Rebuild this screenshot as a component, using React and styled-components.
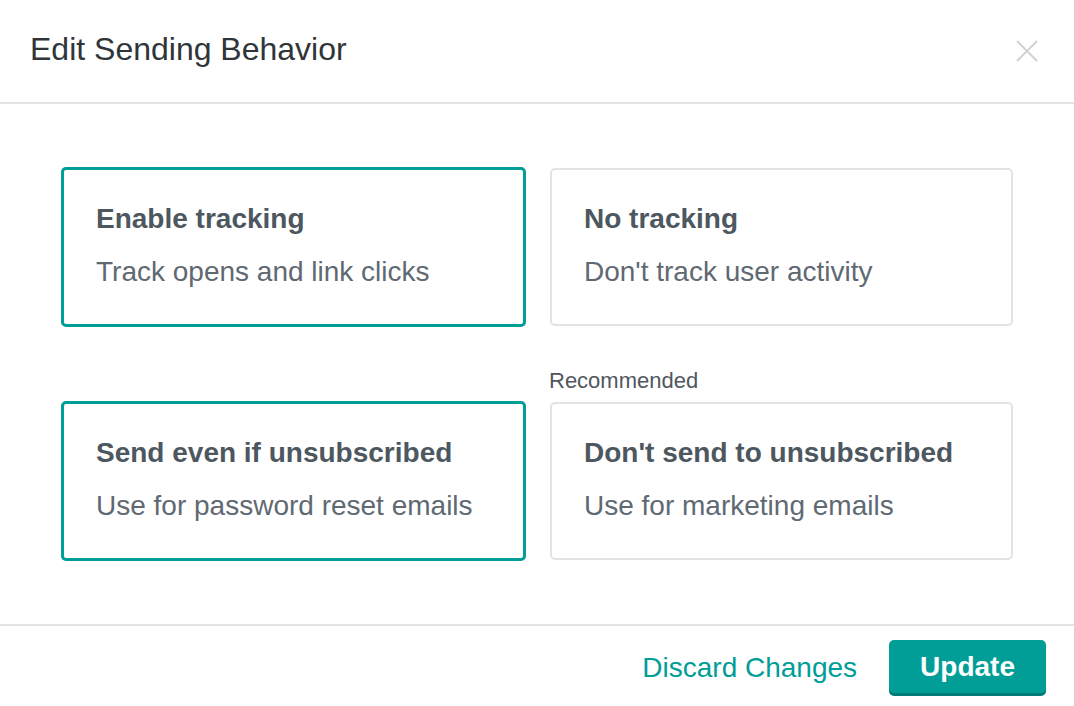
import React, { useState } from "react";
import styled, { createGlobalStyle } from "styled-components";

const GlobalStyle = createGlobalStyle`
  html, body {
    margin: 0;
    padding: 0;
    background: #fff;
  }
  body {
    font-family: "Liberation Sans", Arial, Helvetica, sans-serif;
  }
`;

const TEAL = "#009e97";

const Modal = styled.div`
  width: 1074px;
  height: 706px;
  background: #fff;
  display: flex;
  flex-direction: column;
  box-sizing: border-box;
`;

const Header = styled.div`
  height: 104px;
  display: flex;
  align-items: center;
  justify-content: space-between;
  padding: 0 36px 4px 30px;
  box-sizing: border-box;
  border-bottom: 2px solid #e4e4e4;
`;

const Title = styled.h1`
  margin: 0;
  font-size: 32px;
  line-height: 32px;
  font-weight: 400;
  color: #30353a;
`;

const Close = styled.button`
  border: 0;
  background: none;
  padding: 0;
  width: 22px;
  height: 22px;
  margin-top: 4px;
  cursor: pointer;
  display: flex;
`;

const Body = styled.div`
  flex: 1;
  padding: 63px 60px 0 61px;
  display: grid;
  grid-template-columns: 1fr 1fr;
  column-gap: 23px;
  align-content: start;
`;

const Cell = styled.div`
  display: flex;
  flex-direction: column;
  margin-top: ${(p) => (p.$labelled ? "46px" : "0")};
`;

const Label = styled.div`
  height: 28px;
  box-sizing: border-box;
  padding-bottom: 9px;
  display: flex;
  align-items: flex-end;
  font-size: 22px;
  line-height: 22px;
  color: #50575e;
`;

const Card = styled.button`
  all: unset;
  box-sizing: border-box;
  height: ${(p) => (p.$selected ? "160px" : "158px")};
  margin: ${(p) => (p.$selected ? "0" : "1px")};
  border: ${(p) => (p.$selected ? `3px solid ${TEAL}` : "2px solid #e3e3e3")};
  border-radius: 5px;
  padding: 32px 32px 0 32px;
  display: flex;
  flex-direction: column;
  gap: 19px;
  cursor: pointer;
  font-family: "Liberation Sans", Arial, Helvetica, sans-serif;
`;

const CardTitle = styled.div`
  font-size: 28px;
  line-height: 34px;
  font-weight: 700;
  color: #4d5760;
`;

const CardText = styled.div`
  font-size: 28px;
  line-height: 34px;
  color: #5f6972;
`;

const Footer = styled.div`
  border-top: 2px solid #e4e4e4;
  padding: 14px 28px 10px 0;
  display: flex;
  justify-content: flex-end;
  align-items: center;
  gap: 32px;
`;

const LinkButton = styled.button`
  border: 0;
  background: none;
  padding: 0;
  font-family: inherit;
  font-size: 28px;
  color: ${TEAL};
  cursor: pointer;
  margin-bottom: 1px;
`;

const PrimaryButton = styled.button`
  border: 0;
  background: ${TEAL};
  color: #fff;
  font-family: inherit;
  font-size: 28px;
  font-weight: 700;
  height: 53px;
  padding: 0 31px;
  border-radius: 5px;
  box-shadow: 0 3px 0 #007a74;
  margin-bottom: 3px;
  cursor: pointer;
`;

const groups = [
  {
    key: "tracking",
    options: [
      { id: "track", title: "Enable tracking", text: "Track opens and link clicks" },
      { id: "notrack", title: "No tracking", text: "Don't track user activity" },
    ],
  },
  {
    key: "unsub",
    options: [
      { id: "send", title: "Send even if unsubscribed", text: "Use for password reset emails" },
      {
        id: "nosend",
        title: "Don't send to unsubscribed",
        text: "Use for marketing emails",
        label: "Recommended",
      },
    ],
  },
];

export default function App() {
  const [choice, setChoice] = useState({ tracking: "track", unsub: "send" });

  return (
    <Modal>
      <GlobalStyle />
      <Header>
        <Title>Edit Sending Behavior</Title>
        <Close aria-label="Close">
          <svg width="22" height="22" viewBox="0 0 22 22">
            <path d="M1 1 L21 21 M21 1 L1 21" stroke="#d2d2d2" strokeWidth="2" fill="none" />
          </svg>
        </Close>
      </Header>
      <Body>
        {groups.map((g, gi) =>
          g.options.map((o) => (
            <Cell key={o.id} $labelled={gi > 0}>
              {gi > 0 && <Label>{o.label || ""}</Label>}
              <Card
                $selected={choice[g.key] === o.id}
                onClick={() => setChoice({ ...choice, [g.key]: o.id })}
              >
                <CardTitle>{o.title}</CardTitle>
                <CardText>{o.text}</CardText>
              </Card>
            </Cell>
          ))
        )}
      </Body>
      <Footer>
        <LinkButton>Discard Changes</LinkButton>
        <PrimaryButton>Update</PrimaryButton>
      </Footer>
    </Modal>
  );
}
